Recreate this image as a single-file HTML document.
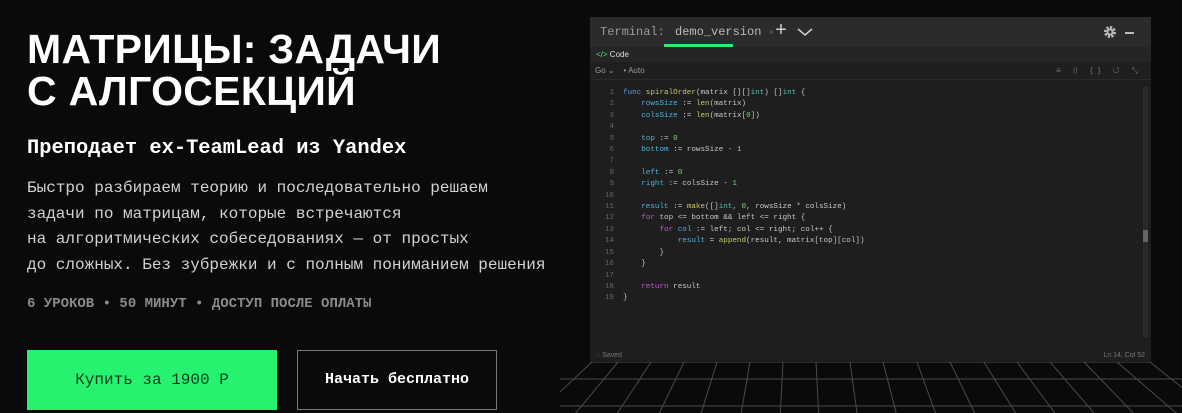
<!DOCTYPE html>
<html><head><meta charset="utf-8"><style>
*{margin:0;padding:0;box-sizing:border-box}
body{width:1182px;height:413px;background:#0a0a0c;overflow:hidden;position:relative;font-family:"Liberation Sans",sans-serif}
.t{position:absolute;left:27px;top:28px;color:#fff;font-size:41px;line-height:42px;font-weight:700;letter-spacing:0.3px}
.s{position:absolute;left:27px;top:136px;color:#fff;font:700 20.4px/26px "Liberation Mono",monospace}
.b{position:absolute;left:27px;top:176px;color:#d2d2d2;font:16px/25.5px "Liberation Mono",monospace}
.m{position:absolute;left:27px;top:295px;color:#8a8a8a;font:700 14px/18px "Liberation Mono",monospace}
.btn1{position:absolute;left:27px;top:350px;width:250px;height:60px;background:#27f26f;color:#0c3a1c;font:16px/60px "Liberation Mono",monospace;text-align:center}
.btn2{position:absolute;left:297px;top:350px;width:200px;height:60px;border:1px solid #777;color:#fff;font:700 15px/58px "Liberation Mono",monospace;text-align:center}
.ed{position:absolute;left:590px;top:17px;width:561px;height:345px;background:#1e1e1f}
.hd{height:30px;background:#2b2b2d;position:relative;font:12px/30px "Liberation Mono",monospace;color:#9a9a9a}
.cb{height:15px;background:#252527;font:8px/15px "Liberation Sans",sans-serif;color:#ddd;padding-left:6px}
.tb{height:18px;background:#1f1f21;font:8px/18px "Liberation Sans",sans-serif;color:#999;padding-left:5px;border-bottom:1px solid #2a2a2a}
.code{position:absolute;left:0;top:67px;font:7.6px/11.4px "Liberation Mono",monospace;color:#c8c8c8;white-space:pre}
.ln{position:absolute;left:0;width:24px;text-align:right;color:#666}
.cl{position:absolute;left:33px}
.k{color:#c05ad0}.f{color:#c8c86a}.v{color:#4fb3e0}.n{color:#7bd07b}.ty{color:#4ec9b0}.fn{color:#5a9ee0}
</style></head><body>
<div class="t">МАТРИЦЫ: ЗАДАЧИ<br>С АЛГОСЕКЦИЙ</div>
<div class="s">Преподает ex-TeamLead из Yandex</div>
<div class="b">Быстро разбираем теорию и последовательно решаем<br>задачи по матрицам, которые встречаются<br>на алгоритмических собеседованиях — от простых<br>до сложных. Без зубрежки и с полным пониманием решения</div>
<div class="m">6 УРОКОВ • 50 МИНУТ • ДОСТУП ПОСЛЕ ОПЛАТЫ</div>
<div class="btn1">Купить за 1900 Р</div>
<div class="btn2">Начать бесплатно</div>

<svg style="position:absolute;left:560px;top:355px" width="622" height="58" viewBox="560 355 622 58">
<g stroke="#4a4a4c" stroke-width="1" fill="none">
<line x1="560" y1="379" x2="1182" y2="379"/>
<line x1="560" y1="406" x2="1182" y2="406"/>
<line x1="590" y1="362" x2="1151" y2="362"/>
<line x1="592" y1="362" x2="530" y2="420"/>
<line x1="618" y1="362" x2="570" y2="420"/>
<line x1="651" y1="362" x2="613" y2="420"/>
<line x1="684" y1="362" x2="656" y2="420"/>
<line x1="717" y1="362" x2="699" y2="420"/>
<line x1="750" y1="362" x2="740" y2="420"/>
<line x1="783" y1="362" x2="780" y2="420"/>
<line x1="816" y1="362" x2="819" y2="420"/>
<line x1="850" y1="362" x2="858" y2="420"/>
<line x1="883" y1="362" x2="898" y2="420"/>
<line x1="917" y1="362" x2="938" y2="420"/>
<line x1="950" y1="362" x2="978" y2="420"/>
<line x1="984" y1="362" x2="1020" y2="420"/>
<line x1="1017" y1="362" x2="1060" y2="420"/>
<line x1="1050" y1="362" x2="1100" y2="420"/>
<line x1="1084" y1="362" x2="1140" y2="420"/>
<line x1="1117" y1="362" x2="1182" y2="418"/>
<line x1="1150" y1="362" x2="1210" y2="410"/>
</g></svg>

<div class="ed">
 <div class="hd"><span style="position:absolute;left:10px">Terminal:</span><span style="position:absolute;left:85px;color:#bbb">demo_version <span style="font-size:9px;color:#666">×</span></span>
 <div style="position:absolute;left:74px;top:27px;width:69px;height:3px;background:#27f26f"></div>
 <span style="position:absolute;left:185px;top:0;font-size:20px;color:#ccc">+</span>
 <svg style="position:absolute;left:207px;top:10px" width="16" height="10"><path d="M1 2 L8 8 L15 2" stroke="#ccc" stroke-width="1.6" fill="none"/></svg>
 <svg style="position:absolute;left:513px;top:8px" width="14" height="14" viewBox="0 0 14 14"><circle cx="7" cy="7" r="4.5" fill="none" stroke="#bbb" stroke-width="3" stroke-dasharray="2.2 1.3"/><circle cx="7" cy="7" r="3.5" fill="#bbb"/><circle cx="7" cy="7" r="1.6" fill="#2b2b2d"/></svg>
 <div style="position:absolute;left:535px;top:15px;width:9px;height:2px;background:#bbb"></div>
 </div>
 <div class="cb"><span style="color:#27f26f">&lt;/&gt;</span> Code</div>
 <div class="tb">Go ⌄ &nbsp;&nbsp; • Auto<span style="position:absolute;right:8px;color:#777;letter-spacing:5px">≡ ⌷ {} ↺ ⤡</span></div>
 <div style="position:absolute;right:3px;top:70px;width:5px;height:250px;background:#2a2a2a"></div>
 <div style="position:absolute;right:3px;top:213px;width:5px;height:12px;background:#666"></div>
 <div class="code">
<div class="ln" style="top:4px">1<br>2<br>3<br>4<br>5<br>6<br>7<br>8<br>9<br>10<br>11<br>12<br>13<br>14<br>15<br>16<br>17<br>18<br>19</div>
<div class="cl" style="top:4px"><span class="fn">func</span> <span class="f">spiralOrder</span>(matrix [][]<span class="ty">int</span>) []<span class="ty">int</span> {
    <span class="v">rowsSize</span> := <span class="f">len</span>(matrix)
    <span class="v">colsSize</span> := <span class="f">len</span>(matrix[<span class="n">0</span>])

    <span class="v">top</span> := <span class="n">0</span>
    <span class="v">bottom</span> := rowsSize - <span class="n">1</span>

    <span class="v">left</span> := <span class="n">0</span>
    <span class="v">right</span> := colsSize - <span class="n">1</span>

    <span class="v">result</span> := <span class="f">make</span>([]<span class="ty">int</span>, <span class="n">0</span>, rowsSize * colsSize)
    <span class="k">for</span> top &lt;= bottom &amp;&amp; left &lt;= right {
        <span class="k">for</span> <span class="v">col</span> := left; col &lt;= right; col++ {
            <span class="v">result</span> = <span class="f">append</span>(result, matrix[top][col])
        }
    }

    <span class="k">return</span> result
}</div>
 </div>
 <div style="position:absolute;left:6px;bottom:1px;font:7px/10px 'Liberation Sans',sans-serif;color:#777">◌ Saved</div>
 <div style="position:absolute;right:6px;bottom:1px;font:7px/10px 'Liberation Sans',sans-serif;color:#777">Ln 14, Col 52</div>
</div>
</body></html>
